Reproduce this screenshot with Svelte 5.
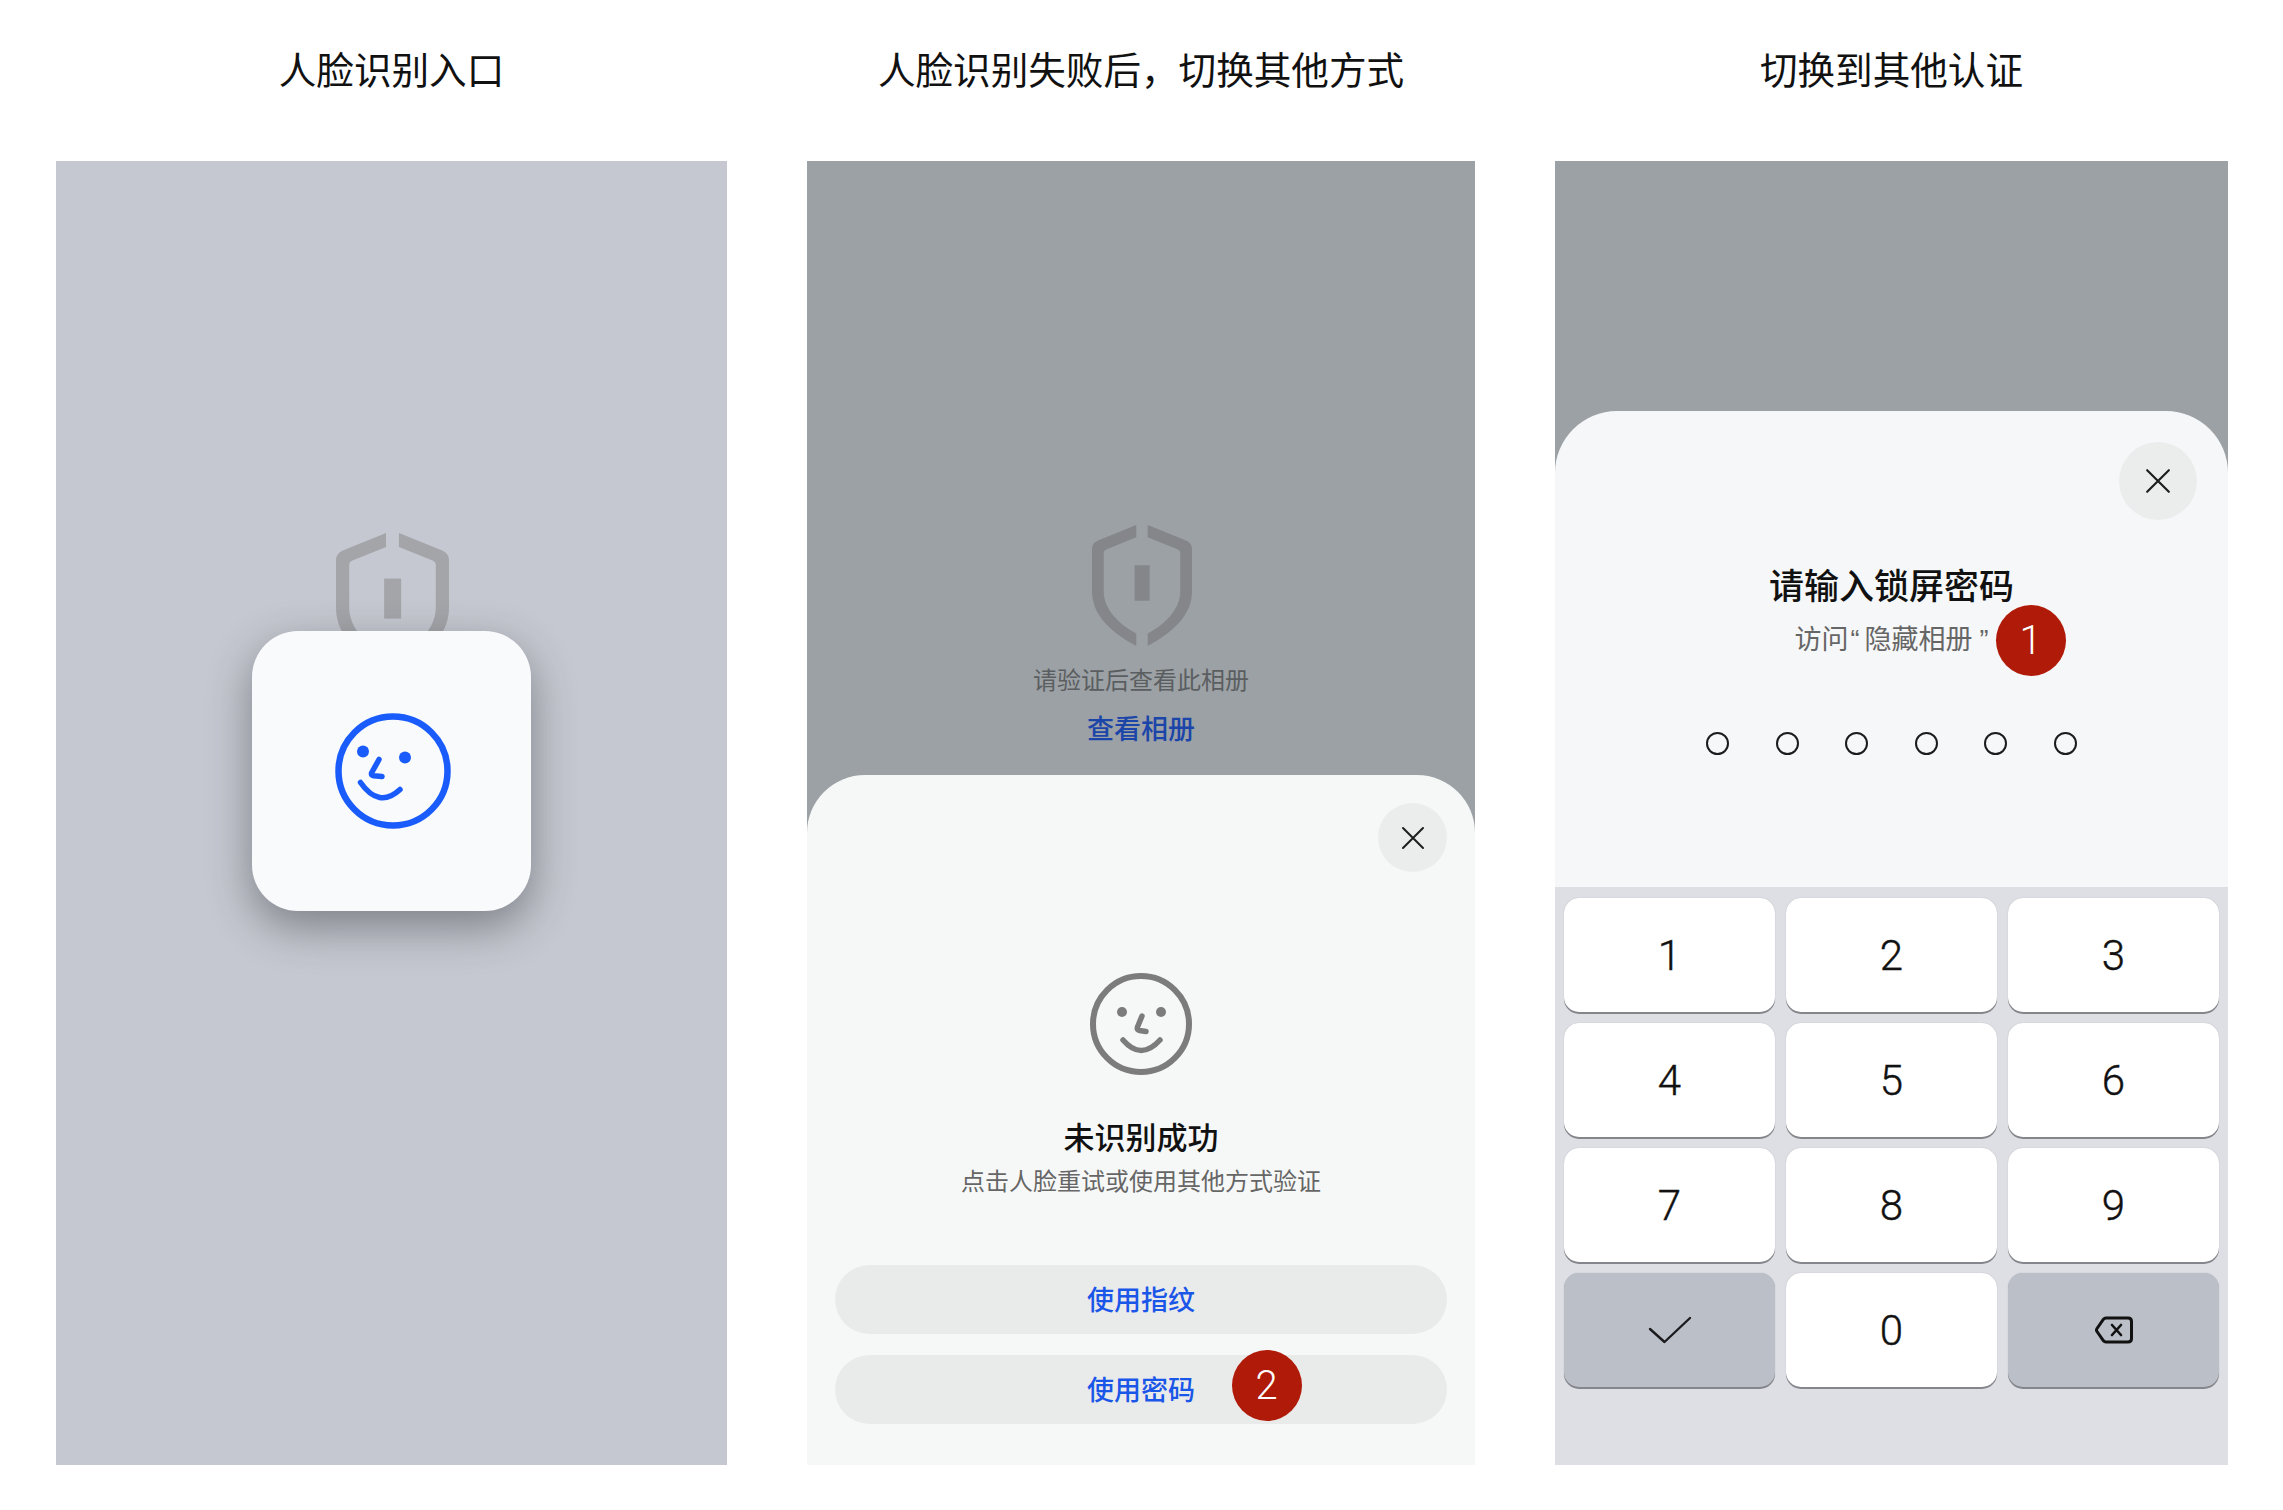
<script>
  const digits = ['1', '2', '3', '4', '5', '6', '7', '8', '9'];
  const dots = [0, 1, 2, 3, 4, 5];
</script>

{#snippet shield()}
  <svg class="shield" viewBox="0 0 100 121" fill="currentColor" aria-hidden="true">
    <path d="M44.3 0V12.3L14 24.5Q11.7 25.5 11.7 28V66C11.7 85 28 100 44.3 108.5V121C15 105 0 88 0 66V24Q0 18 6 15.5Z" />
    <path d="M55.7 0V12.3L86 24.5Q88.3 25.5 88.3 28V66C88.3 85 72 100 55.7 108.5V121C85 105 100 88 100 66V24Q100 18 94 15.5Z" />
    <rect x="42.6" y="40.3" width="15" height="35.4" />
  </svg>
{/snippet}

{#snippet closeBtn()}
  <button class="close" aria-label="关闭">
    <svg viewBox="0 0 24 24" fill="none" stroke="currentColor" stroke-width="2" stroke-linecap="round">
      <path d="M2 2 22 22M22 2 2 22" />
    </svg>
  </button>
{/snippet}

<div class="page">
  <section class="col first">
    <h2>人脸识别入口</h2>
    <div class="screen entry">
      <div class="shield-wrap">{@render shield()}</div>
      <div class="face-card">
        <svg class="face-blue" viewBox="0 0 116 116" fill="none" stroke="#1a5cfb" stroke-linecap="round" stroke-linejoin="round">
          <circle cx="58" cy="58" r="54.5" stroke-width="6.5" />
          <circle cx="28" cy="38.5" r="6" fill="#1a5cfb" stroke="none" />
          <circle cx="70" cy="44.5" r="6" fill="#1a5cfb" stroke="none" />
          <path d="M44 46.5 36.5 60Q36 62.5 38.5 62.8L47 63.5" stroke-width="5.5" />
          <path d="M25.5 69.5Q44 96 65 76.5" stroke-width="5.5" />
        </svg>
      </div>
    </div>
  </section>

  <section class="col second">
    <h2>人脸识别失败后，切换其他方式</h2>
    <div class="screen failed">
      <div class="album">
        {@render shield()}
        <p class="album-tip">请验证后查看此相册</p>
        <p class="album-link">查看相册</p>
      </div>
      <div class="sheet">
        {@render closeBtn()}
        <svg class="face-grey" viewBox="0 0 102 102" fill="none" stroke="#7c7c7c" stroke-linecap="round" stroke-linejoin="round">
          <circle cx="51" cy="51" r="48" stroke-width="6" />
          <circle cx="32" cy="39" r="5" fill="#7c7c7c" stroke="none" />
          <circle cx="71" cy="39" r="5" fill="#7c7c7c" stroke="none" />
          <path d="M52 43 47.5 54Q46.5 57 49.5 57.5L56 58.5" stroke-width="5.5" />
          <path d="M33 67Q51 88 70 67" stroke-width="5.5" />
        </svg>
        <h3>未识别成功</h3>
        <p class="sub">点击人脸重试或使用其他方式验证</p>
        <div class="actions">
          <div class="action"><span>使用指纹</span></div>
          <div class="action"><span>使用密码</span><span class="badge badge-two">2</span></div>
        </div>
      </div>
    </div>
  </section>

  <section class="col third">
    <h2>切换到其他认证</h2>
    <div class="screen password">
      <div class="dim"></div>
      <div class="sheet pw-sheet">
        {@render closeBtn()}
        <h3>请输入锁屏密码</h3>
        <p class="sub">访问<span class="quote">“</span>隐藏相册<span class="quote end">”</span></p>
        <span class="badge badge-one">1</span>
        <div class="dots">
          {#each dots as d (d)}
            <span class="dot"></span>
          {/each}
        </div>
      </div>
      <div class="keypad">
        {#each digits as n (n)}
          <div class="key">{n}</div>
        {/each}
        <div class="key fn">
          <svg class="check" viewBox="0 0 44 28" fill="none" stroke="#1c1c1e" stroke-width="2.4" stroke-linecap="round" stroke-linejoin="round">
            <path d="M2 13 16.5 26 42 2" />
          </svg>
        </div>
        <div class="key">0</div>
        <div class="key fn">
          <svg class="backspace" viewBox="0 0 38 28" fill="none" stroke="#111" stroke-width="3" stroke-linecap="round" stroke-linejoin="round">
            <path d="M11 2H33Q36.5 2 36.5 5.5V22.5Q36.5 26 33 26H11Q9.5 26 8.5 24.8L2 15.5Q1 14 2 12.5L8.5 3.2Q9.5 2 11 2Z" />
            <path d="M17 9 26 19M26 9 17 19" stroke-width="2.6" />
          </svg>
        </div>
      </div>
    </div>
  </section>
</div>

<style>
  :global(body) {
    margin: 0;
    background: #fff;
  }

  .page {
    display: flex;
    gap: 80px;
    padding-left: 56px;
    height: 1510px;
    box-sizing: border-box;
    font-family: "Noto Sans CJK SC", "Liberation Sans", sans-serif;
    color: #111;
  }

  .col {
    display: flex;
    flex-direction: column;
  }
  .first { width: 671px; }
  .second { width: 668px; }
  .third { width: 673px; }

  h2 {
    margin: 0;
    height: 161px;
    padding-top: 44px;
    box-sizing: border-box;
    font-size: 37.6px;
    line-height: 48px;
    font-weight: 400;
    text-align: center;
    color: #111;
  }

  .screen {
    height: 1304px;
    display: flex;
    flex-direction: column;
    overflow: hidden;
    position: relative;
  }

  /* entry */
  .entry {
    background: #c5c8d0;
    align-items: center;
    padding-top: 372px;
    box-sizing: border-box;
  }
  .shield-wrap {
    width: 113px;
    margin-left: 2px;
    color: #a3a5a9;
  }
  .shield {
    display: block;
    width: 100%;
  }
  .face-card {
    margin-top: -38.7px;
    width: 279px;
    height: 280px;
    border-radius: 46px;
    background: #f8fafc;
    box-shadow: 0 16px 44px rgba(40, 42, 48, 0.45);
    display: flex;
    align-items: center;
    justify-content: center;
    position: relative;
  }
  .face-blue {
    width: 116px;
    height: 116px;
    margin-left: 3px;
  }

  /* failed */
  .failed { background: #9ca1a5; }
  .album {
    height: 614px;
    flex: none;
    box-sizing: border-box;
    padding-top: 364px;
    display: flex;
    flex-direction: column;
    align-items: center;
    color: #848689;
  }
  .album .shield {
    width: 100px;
    margin-left: 2px;
  }
  .album-tip {
    margin: 17px 0 0;
    font-size: 24px;
    line-height: 32px;
    color: #5b5e61;
  }
  .album-link {
    margin: 15px 0 0;
    font-size: 27px;
    line-height: 36px;
    font-weight: 500;
    color: #1b45a9;
  }

  .sheet {
    flex: 1;
    background: #f6f8f7;
    border-radius: 58px 58px 0 0;
    display: flex;
    flex-direction: column;
    align-items: center;
    position: relative;
    padding: 28px 28px 0;
    box-sizing: border-box;
  }
  .close {
    align-self: flex-end;
    flex: none;
    width: 69px;
    height: 69px;
    padding: 0;
    border: 0;
    border-radius: 50%;
    background: #ebedec;
    color: #1e1e1e;
    display: flex;
    align-items: center;
    justify-content: center;
  }
  .close svg {
    width: 24px;
    height: 24px;
  }
  .face-grey {
    width: 102px;
    height: 102px;
    margin-top: 101px;
    flex: none;
  }
  h3 {
    margin: 41px 0 0;
    font-size: 31px;
    line-height: 40px;
    font-weight: 500;
    color: #111;
  }
  .sub {
    margin: 8px 0 0;
    font-size: 24px;
    line-height: 32px;
    color: #666;
  }
  .actions {
    align-self: stretch;
    margin-top: 69px;
    display: flex;
    flex-direction: column;
    gap: 21px;
  }
  .action {
    height: 69px;
    padding-bottom: 2px;
    box-sizing: border-box;
    border-radius: 35px;
    background: #e9ebea;
    display: flex;
    align-items: center;
    justify-content: center;
    font-size: 27px;
    font-weight: 500;
    color: #1a56e8;
    position: relative;
  }

  .badge {
    position: absolute;
    width: 70px;
    height: 71px;
    border-radius: 50%;
    background: #b01a08;
    color: #fff;
    font-family: Roboto, "Liberation Sans", sans-serif;
    font-weight: 300;
    font-size: 40px;
    line-height: 71px;
    text-align: center;
  }
  .badge-two {
    left: 396.5px;
    top: -5px;
  }
  .badge-one {
    left: 440.5px;
    top: 194px;
  }

  /* password */
  .password { background: #dedfe4; }
  .dim {
    height: 250px;
    flex: none;
    background: #9ca1a5;
    margin-bottom: -62px;
    padding-bottom: 62px;
  }
  .pw-sheet {
    flex: none;
    height: 476px;
    background: #f6f7f8;
    border-radius: 62px 62px 0 0;
    padding: 31px 31px 0;
  }
  .pw-sheet .close {
    width: 78px;
    height: 78px;
  }
  .pw-sheet .close svg {
    width: 26px;
    height: 26px;
  }
  .pw-sheet h3 {
    font-size: 35px;
    line-height: 44px;
    margin-top: 42px;
  }
  .pw-sheet .sub {
    font-size: 27px;
    line-height: 36px;
    margin-top: 14px;
  }
  .quote {
    display: inline-block;
    width: 16px;
    box-sizing: border-box;
    padding-left: 2px;
    font-family: "Liberation Sans", sans-serif;
    text-align: left;
  }
  .quote.end {
    padding-left: 0;
    text-align: right;
  }
  .dots {
    margin-top: 74px;
    display: flex;
    gap: 46.6px;
  }
  .dot {
    width: 23px;
    height: 23px;
    box-sizing: border-box;
    border: 2.4px solid #1c1c1e;
    border-radius: 50%;
  }

  .keypad {
    flex: 1;
    display: grid;
    grid-template-columns: repeat(3, 211px);
    grid-auto-rows: 114px;
    gap: 11px;
    padding: 11px 9px 0;
  }
  .key {
    border-radius: 15px;
    background: #fff;
    box-shadow: 0 2px 0 #85868b, 0 0 1px rgba(0, 0, 0, 0.25);
    display: flex;
    align-items: center;
    justify-content: center;
    font-family: Roboto, "Liberation Sans", sans-serif;
    font-size: 42px;
    font-weight: 300;
    -webkit-text-stroke: 0.4px #111;
    color: #111;
  }
  .key.fn { background: #bbbfc8; }
  .check {
    width: 44px;
    height: 28px;
  }
  .backspace {
    width: 38px;
    height: 28px;
  }
</style>
